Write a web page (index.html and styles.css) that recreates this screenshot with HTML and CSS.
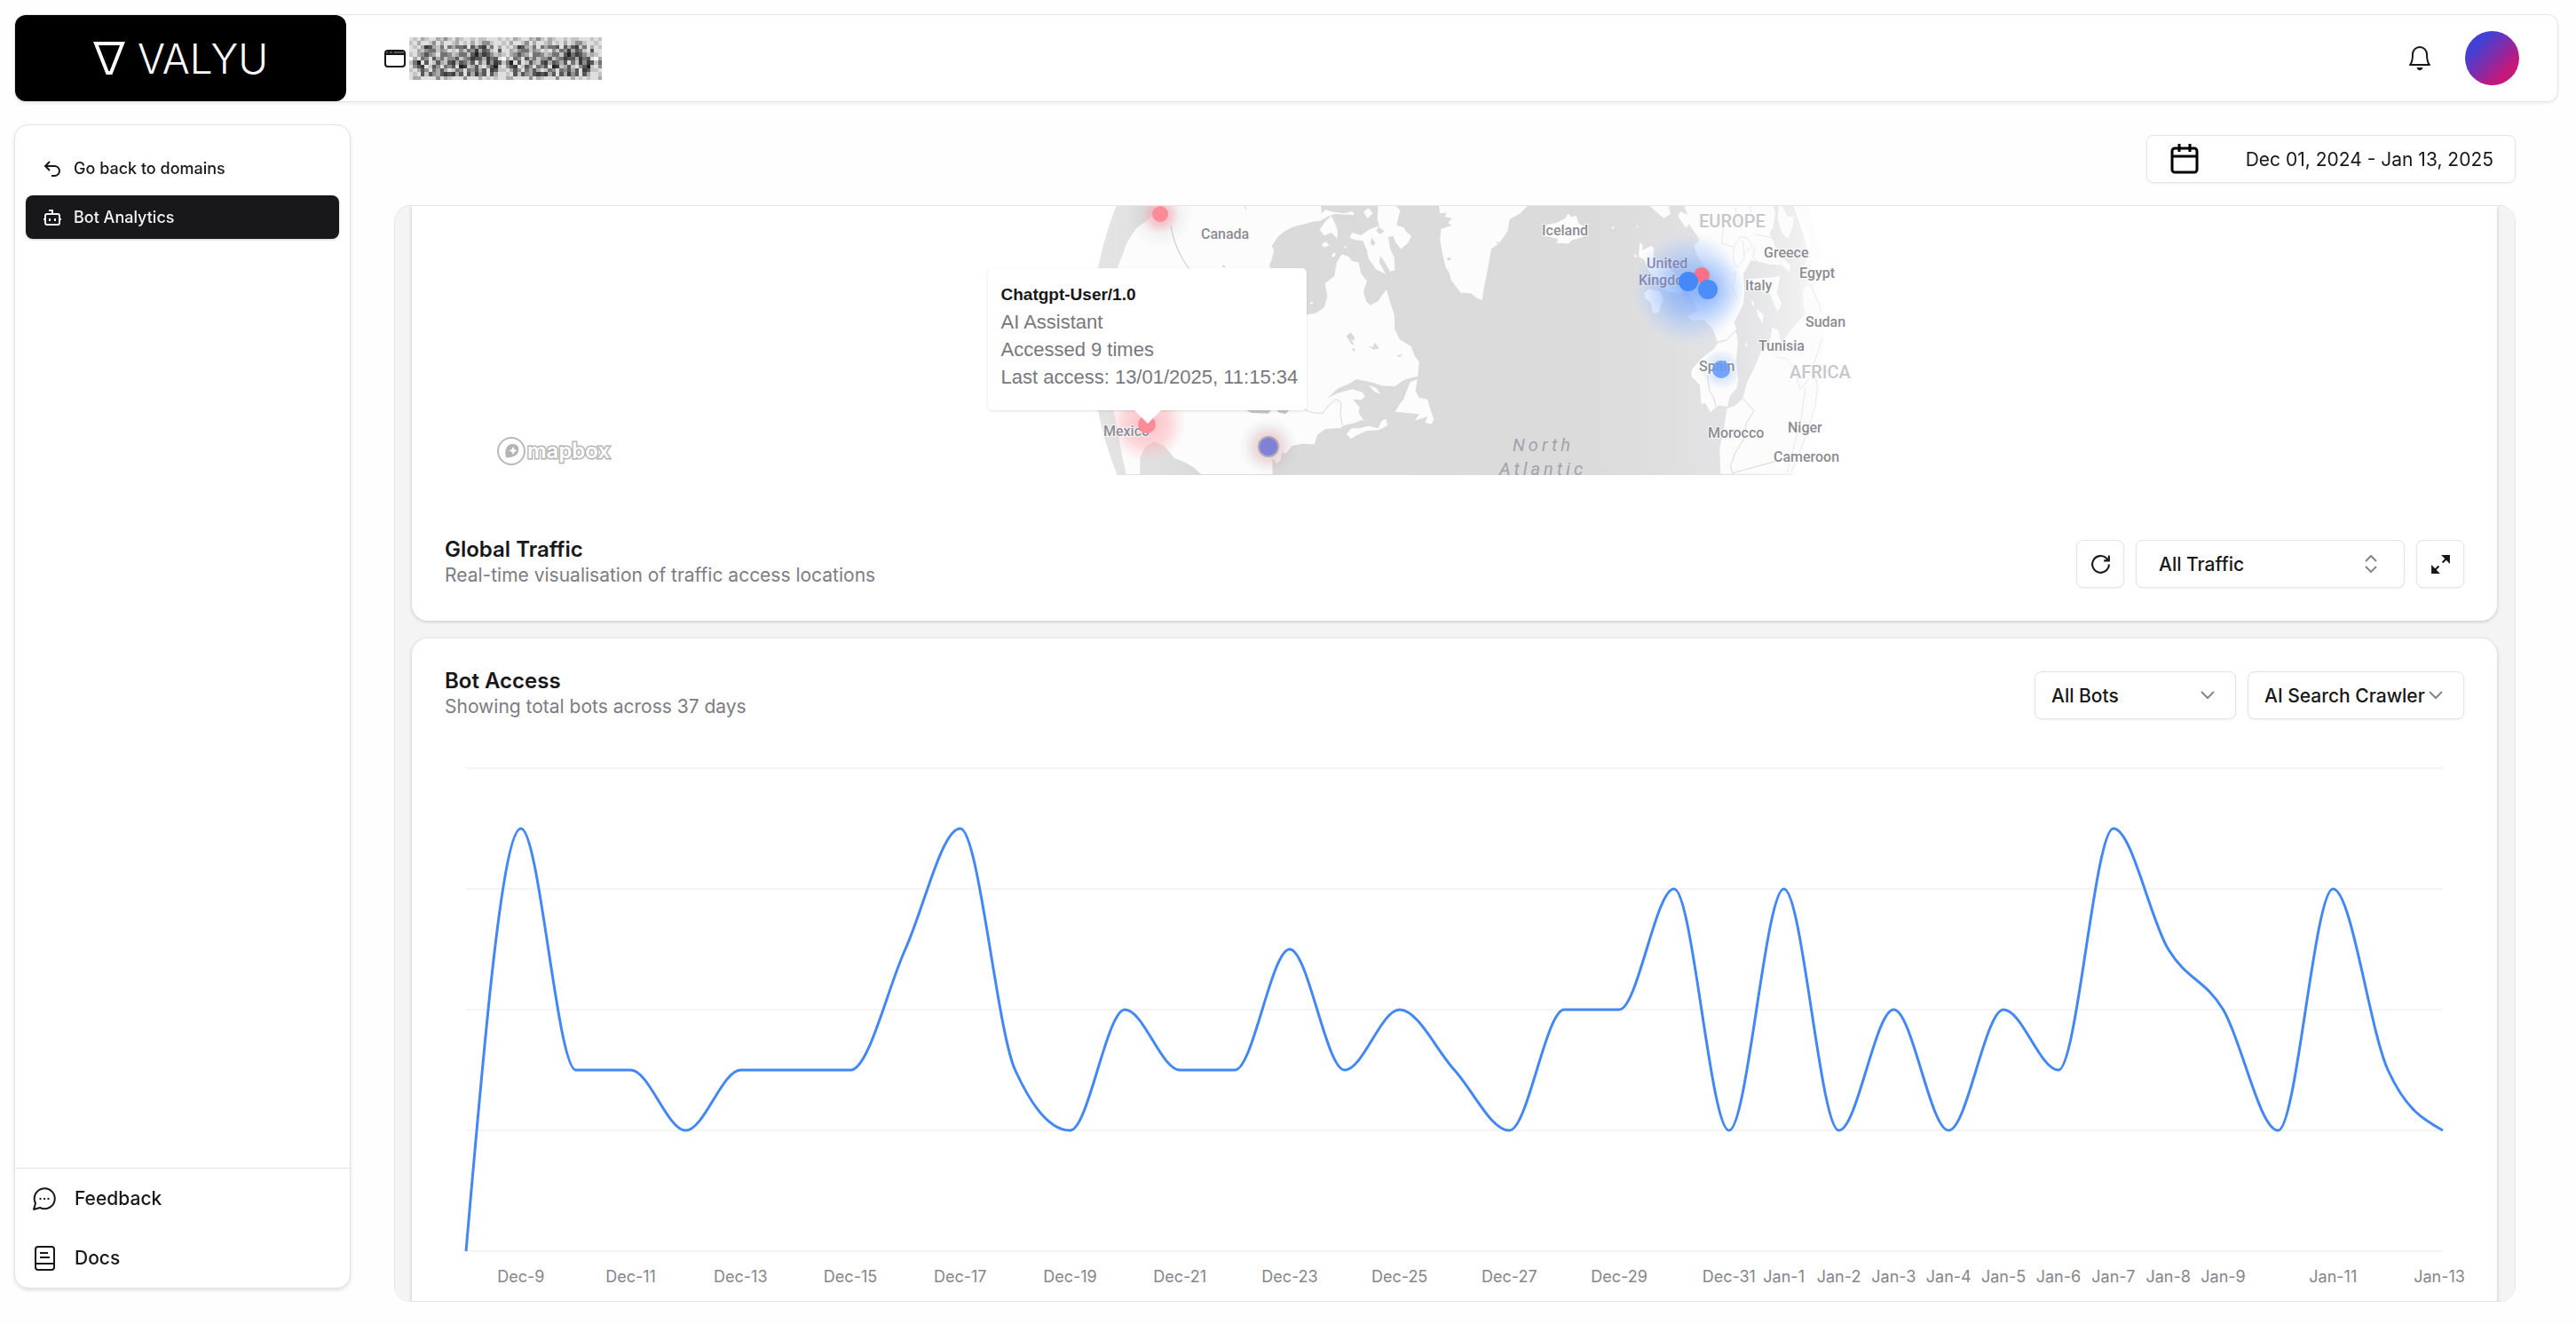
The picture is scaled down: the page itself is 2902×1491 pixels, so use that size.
FILE: index.html
```html
<!DOCTYPE html>
<html lang="en">
<head>
<meta charset="utf-8">
<meta name="viewport" content="width=device-width, initial-scale=1">
<title>Valyu – Bot Analytics</title>
<link rel="stylesheet" href="styles.css">
</head>
<body>
<div class="app">
  <header class="topbar">
    <a class="brand" href="#" aria-label="Valyu home">
      <svg class="brand-mark" viewBox="0 0 36 38" fill="none" stroke="#fff" stroke-width="4" aria-hidden="true"><path d="M3 2H33L20 35H16Z"/></svg>
      <span class="brand-name">VALYU</span>
    </a>
    <div class="domain">
      <svg class="icon-window" viewBox="0 0 24 20" fill="none" stroke="#18181b" stroke-width="2" aria-hidden="true"><rect x="1" y="1" width="22" height="18" rx="3"/><path d="M1 5H23" stroke-width="2"/><path d="M2 3H22" stroke="#55555a"/><path d="M5 1V5M10 1V5"/></svg>
      <canvas class="redacted" id="redacted" width="50" height="11"></canvas>
    </div>
    <div class="topbar-actions">
      <button class="icon-button" type="button" aria-label="Notifications">
        <svg viewBox="0 0 26 30" fill="none" stroke="#18181b" stroke-width="2" stroke-linejoin="round" aria-hidden="true"><path d="M2 22C5 19 5 15 5 10a8 8 0 0 1 16 0c0 5 0 9 3 12Z"/><path d="M10 25.500c1 3 5 3 6 0Z" fill="#18181b" stroke-width="1"/></svg>
      </button>
      <button class="avatar" type="button" aria-label="Account"></button>
    </div>
  </header>

  <div class="body">
    <nav class="sidebar" aria-label="Main">
      <div class="nav-main">
        <a class="nav-item" href="#">
          <svg viewBox="0 0 24 24" fill="none" stroke="currentColor" stroke-width="2" aria-hidden="true"><path d="M9 14L4 9l5-5"/><path d="M4 9h10.500a5.500 5.500 0 0 1 0 11H11"/></svg>
          Go back to domains
        </a>
        <a class="nav-item nav-item-active" href="#">
          <svg viewBox="0 0 24 24" fill="none" stroke="currentColor" stroke-width="2" aria-hidden="true"><path d="M12 8V4H8"/><rect x="4" y="8" width="16" height="12" rx="2"/><path d="M2 14h2M20 14h2M15 13v3M9 13v3"/></svg>
          Bot Analytics
        </a>
      </div>
      <div class="nav-foot">
        <a class="nav-link" href="#">
          <svg viewBox="0 0 28 28" fill="none" stroke="currentColor" stroke-width="2" stroke-linejoin="round" aria-hidden="true"><path d="M2 26l2-7a11.500 11.500 0 1 1 5 5Z"/><path d="M8.500 14h2M13 14h2M17.500 14h2" stroke-width="2"/></svg>
          Feedback
        </a>
        <a class="nav-link" href="#">
          <svg viewBox="0 0 28 28" fill="none" stroke="currentColor" stroke-width="2" aria-hidden="true"><rect x="4" y="1" width="21" height="26" rx="3"/><path d="M4 20H25M9 8H18M9 13H20"/></svg>
          Docs
        </a>
      </div>
    </nav>

    <main class="main">
      <div class="toolbar">
        <button class="control date-range" type="button">
          <svg viewBox="0 0 32 34" fill="none" stroke="#000" stroke-width="3" aria-hidden="true"><rect x="2" y="5" width="28" height="27" rx="3"/><path d="M2 14H30M10 0V9M22 0V9"/></svg>
          <span>Dec 01, 2024 - Jan 13, 2025</span>
        </button>
      </div>

      <div class="panel">
        <section class="card card-map">
          <div class="map">
            <svg class="globe" viewBox="1188 233 902 303" role="img" aria-label="Traffic map">
              <defs>
                <linearGradient id="ocean" gradientUnits="userSpaceOnUse" x1="1229" y1="383" x2="2049" y2="383">
                  <stop offset="0" stop-color="#e5e5e6"/><stop offset=".08" stop-color="#e0e0e0"/><stop offset=".15" stop-color="#dadada"/><stop offset=".7" stop-color="#dbdbdb"/><stop offset=".9" stop-color="#e4e4e6"/><stop offset=".97" stop-color="#efeff0"/><stop offset="1" stop-color="#fbfbfb"/>
                </linearGradient>
                <radialGradient id="heatBlue"><stop offset="0" stop-color="#5c96fa" stop-opacity=".75"/><stop offset=".45" stop-color="#8db5fb" stop-opacity=".6"/><stop offset=".75" stop-color="#a9c7fc" stop-opacity=".35"/><stop offset="1" stop-color="#c0d6ff" stop-opacity="0"/></radialGradient>
                <radialGradient id="heatRed"><stop offset="0" stop-color="#fb8f9b" stop-opacity=".6"/><stop offset=".6" stop-color="#fcb4bb" stop-opacity=".5"/><stop offset="1" stop-color="#fcc8cc" stop-opacity="0"/></radialGradient>
                <radialGradient id="shade"><stop offset="0" stop-color="#55555f" stop-opacity=".5"/><stop offset="1" stop-color="#8c8c96" stop-opacity="0"/></radialGradient>
              </defs>
              <circle cx="1639" cy="383" r="410" fill="url(#ocean)"/>
              <g class="land">
                <g transform="translate(1080 220) scale(.357 .3333)">
                  <path d="M622 30L605 80L560 115L530 165L515 210L500 250L492 400L485 600L488 725L502 800L515 880L528 945H572V890L590 850L620 835L650 850L680 890L715 905L745 925L765 945H990V720H800V36Z"/>
                </g>
                <g transform="translate(1360 228) scale(.3333)">
                  <path d="M0 5H384L386 40L400 28L430 36L465 40L492 32L496 45L430 42L408 50L380 66L354 68L330 76L308 80L285 88L262 100L240 118L218 150L226 165L218 195L210 215L240 300L280 350L335 382L365 378L395 358L406 320L398 276L430 252L438 205L455 178L478 186L488 200L512 206L520 244L540 268L528 305L538 338L552 350L578 336L594 312L606 298L618 340L632 380L634 432L650 465L690 490L700 520L716 542L712 590L680 598L660 606L635 624L590 622L560 612L505 600L480 615L440 632L405 666L440 647L490 634L525 644L533 660L520 670L492 668L515 695L512 714L528 738L555 742L520 738L500 748L462 756L450 765L400 768L372 788L362 820L320 818L285 826L268 850L252 848L248 872L236 884L220 866L218 895L204 920H0Z"/>
                  <path d="M470 785L488 766L515 766L545 758L578 766L590 740L604 734L610 756L580 772L540 774L505 790L486 802Z"/>
                  <path d="M710 600L704 640L716 662L745 668L750 690L766 735L758 752L736 746L745 726L720 734L702 740L716 718L635 710L650 685L664 668L670 650L686 610Z"/>
                  <path d="M545 620L572 630L586 650L566 643Z"/>
                  <path d="M578 10H634L652 30L645 60L640 80L665 88L672 102L690 115L680 138L655 160L638 140L628 116L612 120L618 160L632 188L634 232L618 236L600 205L585 182L582 206L604 246L570 228L545 192L540 165L526 132L500 130L481 122L490 104L520 114L548 94L582 82L575 60Z"/>
                  <path d="M528 35L545 22L560 40L542 56ZM400 66L420 48L432 75L440 95V126L420 105L395 115L380 95ZM386 145L400 136L413 146L396 155ZM420 182L430 170L434 180L424 190ZM462 150l8 2-4 8ZM345 345l14-8-4 10Z"/>
                  <path class="water" d="M470 455L484 442L498 458L496 470L484 464L498 484L488 482ZM545 488L560 492L566 476L582 496L562 500ZM490 495l12 4-8 8ZM640 520L662 515L650 526ZM578 85L600 100L584 110L572 100ZM556 120L568 140L562 150L552 142Z"/>
                  <path class="lake" d="M128 703H216L208 716L150 714ZM234 702H280L264 718L240 712Z"/>
                  <path class="border" d="M330 704L358 714L390 715L412 688L435 667L453 680L450 720L457 756M126 12l5 16"/>
                  <path class="lake" d="M50 220l6-6 6 7Z"/>
                </g>
                <path class="border" d="M1319 255C1322 275 1330 290 1339 303"/>
                <g transform="translate(1600 220) scale(.357 .3333)">
                  <path d="M58 30L62 64L82 62L78 76L100 80L88 96L100 104L66 116L62 150L70 200L80 246L90 262L98 290L128 332L160 334L176 348L195 358L200 320L212 256L224 184L248 166L276 124L282 84L316 64L345 30Z"/>
                  <path d="M385 120L400 102L430 96L458 80L466 64L478 76L492 72L500 98L530 115L522 140L480 154L468 166L430 164L434 150L395 140Z"/>
                  <path class="water" d="M84 214h12v8h-10ZM238 158l12 4-6 6Z"/>
                  <path d="M720 34H782L790 66L768 80L748 62ZM606 108h5v9h-5ZM684 102l4 10-5-2ZM1028 498l5 10-6 12Z"/>
                </g>
                <g transform="translate(1820 228) scale(.3333)">
                  <path d="M228 5H530L540 40L532 90L520 105L545 165L565 192L592 215L588 238L560 214L520 212L500 206L458 198L444 222L432 244L436 300L432 345L415 380L400 408L410 432L345 476L330 432L300 400L262 402L245 388L276 370L262 330L240 300L290 250L300 220L276 182L265 150L284 128L262 96L248 76L238 90L212 50L218 34L244 44Z"/>
                  <path d="M440 262L540 255L556 250L546 312L562 345L548 372L538 352L520 308L480 300L440 280ZM476 362L500 382L498 412L482 388ZM458 328L470 344L464 356ZM640 215L658 160L652 100L622 60L608 8L560 10L582 50L602 50L600 84L582 126L562 104L548 60L552 10H650L700 200Z"/>
                  <path d="M345 478L405 432L413 470L408 540L415 600L410 630L386 656L378 694L350 688L320 712L304 680L290 684L285 620L256 590L258 568L290 530L335 495Z"/>
                  <path d="M376 700L404 690L430 665L445 610L470 560L490 510L520 480L530 424L550 436L560 480L592 436L640 380L632 300L660 268L690 350L705 460L690 640L600 920H355L352 830L366 770Z"/>
                  <path d="M82 136L92 150L90 164L120 150L130 156L128 190L160 204L200 244L236 280L220 312L175 304L160 285L135 262L110 230L96 196L78 186ZM96 310L112 296L150 304L160 330L146 374L126 378L120 342L100 326ZM62 182l8-4v14Z"/>
                  <path class="border" d="M345 476L375 468L410 432M310 588L318 640L330 660L340 694M430 665L468 707L442 748L435 800L404 850L388 895L396 917L540 878"/>
                  <path class="border faint" d="M365 90L358 140L400 154L420 120L444 122L462 150L430 180M400 154L398 200L412 222L436 190L430 130M405 20L412 60L425 95M455 15L460 60L490 80M470 150L465 190L480 200M470 110L540 125M385 250L408 235L395 290L412 330M538 525L578 530L600 562L625 635L652 600M642 630L628 730L580 917M655 275L690 350L695 372M697 466L668 556L682 620L676 690L640 800L592 917"/>
                </g>
              </g>
              <g class="heat">
                <circle cx="1902" cy="326" r="64" fill="url(#heatBlue)"/><circle cx="1924" cy="327" r="40" fill="url(#heatBlue)" opacity=".6"/>
                <circle cx="1939" cy="417" r="24" fill="url(#heatBlue)" opacity=".5"/>
                <circle cx="1307" cy="243" r="38" fill="url(#shade)" opacity=".35"/><circle cx="1307" cy="243" r="22" fill="url(#heatRed)"/>
                <circle cx="1292" cy="478" r="44" fill="url(#heatRed)"/>
                <circle cx="1429" cy="504" r="34" fill="url(#shade)" opacity=".5"/><circle cx="1429" cy="504" r="26" fill="url(#heatRed)" opacity=".5"/>
              </g>
              <g class="map-labels">
                <text x="1353" y="270">Canada</text><text x="1243" y="492">Mexico</text><text x="1737" y="266">Iceland</text>
                <text x="1987" y="291">Greece</text><text x="2027" y="314">Egypt</text><text x="1966" y="328">Italy</text>
                <text class="tinted" x="1855" y="303">United</text><text class="tinted" x="1846" y="322">Kingdom</text><text x="2034" y="369">Sudan</text>
                <text x="1981" y="396">Tunisia</text><text x="1914" y="419">Spain</text><text x="1924" y="494">Morocco</text>
                <text x="2014" y="488">Niger</text><text x="1998" y="521">Cameroon</text>
                <text class="continent" x="1914" y="257">EUROPE</text><text class="continent" x="2016" y="427">AFRICA</text>
                <text class="sea" x="1704" y="509">North</text><text class="sea" x="1689" y="536">Atlantic</text>
              </g>
              <g class="markers">
                <circle cx="1307" cy="242" r="9" fill="#fa8c9a"/>
                <circle cx="1292" cy="479" r="10" fill="#fa8c9a"/>
                <circle cx="1429" cy="504" r="12" fill="#a9a9b4"/><circle cx="1429" cy="504" r="10" fill="#8280d6"/>
                <circle cx="1917" cy="311" r="9" fill="#fb6f88" stroke="#b6aab2" stroke-width="1"/>
                <circle cx="1902" cy="318" r="11" fill="#4688f8"/><circle cx="1924" cy="327" r="11" fill="#4d8df9"/>
                <circle cx="1939" cy="417" r="10" fill="#6398fb" opacity=".85"/>
              </g>
            </svg>
            <div class="popup">
              <h3>Chatgpt-User/1.0</h3>
              <p>AI Assistant</p>
              <p>Accessed 9 times</p>
              <p>Last access: 13/01/2025, 11:15:34</p>
            </div>
            <a class="mapbox" href="#" aria-label="Mapbox">
              <svg viewBox="0 0 134 34" aria-hidden="true"><circle cx="17" cy="17" r="15" fill="#fff" stroke="#b9b9b9" stroke-width="2"/><path d="M11 24C9 17 11 9 19 9c5 0 7 4 6 8-1 5-7 8-14 7Z" fill="#b4b4b4"/><path d="M19 12l1.500 3 3 1.500-3 1.500-1.500 3-1.500-3-3-1.500 3-1.500Z" fill="#fff"/><text x="35" y="25">mapbox</text></svg>
            </a>
          </div>
          <div class="card-row card-row-map">
            <div>
              <h2>Global Traffic</h2>
              <p class="sub">Real-time visualisation of traffic access locations</p>
            </div>
            <div class="controls">
              <button class="control control-icon" type="button" aria-label="Refresh">
                <svg viewBox="0 0 24 24" fill="none" stroke="#18181b" stroke-width="2" aria-hidden="true"><path d="M21 12a9 9 0 1 1-2.600-6.400L21 8"/><path d="M21 2.500V8h-5.500"/></svg>
              </button>
              <div class="select select-traffic">
                <select class="control" aria-label="Traffic"><option>All Traffic</option><option>Bots</option></select>
                <svg viewBox="0 0 16 20" fill="none" stroke="#85858c" stroke-width="2" aria-hidden="true"><path d="M2 7L8 1L14 7M2 13L8 19L14 13"/></svg>
              </div>
              <button class="control control-icon" type="button" aria-label="Expand">
                <svg viewBox="0 0 24 24" fill="none" stroke="#18181b" stroke-width="2" aria-hidden="true"><path d="M14 10L20 4M10 14L4 20"/><path d="M15 3H21V9ZM3 15V21H9Z" fill="#18181b"/></svg>
              </button>
            </div>
          </div>
        </section>

        <section class="card card-chart">
          <div class="card-row">
            <div>
              <h2>Bot Access</h2>
              <p class="sub">Showing total bots across 37 days</p>
            </div>
            <div class="controls">
              <div class="select select-bots">
                <select class="control" aria-label="Bot"><option>All Bots</option></select>
                <svg viewBox="0 0 16 10" fill="none" stroke="#85858c" stroke-width="2" aria-hidden="true"><path d="M1 1L8 8L15 1"/></svg>
              </div>
              <div class="select select-type">
                <select class="control" aria-label="Bot type"><option>AI Search Crawler</option></select>
                <svg viewBox="0 0 16 10" fill="none" stroke="#85858c" stroke-width="2" aria-hidden="true"><path d="M1 1L8 8L15 1"/></svg>
              </div>
            </div>
          </div>
          <svg class="chart" id="chart" role="img" aria-label="Bot access per day"></svg>
        </section>
      </div>
    </main>
  </div>
</div>
<script src="app.js"></script>
</body>
</html>
```
FILE: styles.css
```css
* { box-sizing: border-box; }

body {
  margin: 0;
  background: #fefefe;
  color: #18181b;
  font-family: Inter, "Liberation Sans", sans-serif;
  font-size: 21px;
}

h2, h3, p { margin: 0; }
a { color: inherit; text-decoration: none; }
button, select { font: inherit; color: inherit; cursor: pointer; }

.app {
  display: flex;
  flex-direction: column;
  gap: 25px;
  height: 100vh;
  padding: 16px 20px 25px 16px;
}

/* Top bar */
.topbar {
  display: flex;
  align-items: center;
  flex: none;
  height: 99px;
  border: 1px solid #e4e4e7;
  border-radius: 12px;
  background: #fff;
  box-shadow: 0 2px 3px rgba(0, 0, 0, 0.06);
}
.brand {
  display: flex;
  align-items: center;
  justify-content: center;
  gap: 14px;
  width: 373px;
  height: 97px;
  border-radius: 12px;
  background: #000;
  color: #fff;
}
.brand-mark { width: 36px; height: 38px; }
.brand-name { font-size: 46px; font-weight: 300; line-height: 48px; }
.domain { display: flex; align-items: center; gap: 4px; margin-left: 43px; }
.icon-window { width: 24px; height: 20px; }
.redacted { width: 217px; height: 48px; image-rendering: pixelated; }
.topbar-actions { display: flex; align-items: center; gap: 38px; margin-left: auto; padding-right: 43px; }
.icon-button { display: flex; padding: 0; border: 0; background: none; }
.icon-button svg { width: 26px; height: 30px; }
.avatar {
  width: 61px;
  height: 61px;
  padding: 0;
  border: 0;
  border-radius: 50%;
  background: linear-gradient(135deg, #4440d4 25%, #c4187a 75%);
}

/* Sidebar */
.body { display: flex; flex: 1; min-height: 0; }
.sidebar {
  display: flex;
  flex-direction: column;
  flex: none;
  width: 379px;
  margin-bottom: 15px;
  border: 1px solid #e4e4e7;
  border-radius: 16px;
  background: #fff;
  box-shadow: 0 2px 4px rgba(0, 0, 0, 0.12);
}
.nav-main { display: flex; flex-direction: column; gap: 6px; flex: 1; padding: 24px 12px; }
.nav-item {
  display: flex;
  align-items: center;
  gap: 12px;
  height: 49px;
  padding: 0 18px;
  border-radius: 8px;
  font-size: 18px;
  font-weight: 500;
}
.nav-item svg { width: 24px; height: 24px; }
.nav-item-active { background: #18181b; color: #f4f4f5; box-shadow: 0 1px 3px rgba(0, 0, 0, 0.2); }
.nav-foot { display: flex; flex-direction: column; border-top: 1px solid #e4e4e7; }
.nav-link { display: flex; align-items: center; gap: 20px; height: 67px; padding: 0 19px; font-size: 21px; font-weight: 500; }
.nav-link svg { width: 28px; height: 28px; }

/* Main column */
.main { display: flex; flex-direction: column; gap: 25px; flex: 1; min-width: 0; margin: 0 48px 0 49px; padding-top: 12px; }
.toolbar { display: flex; justify-content: flex-end; }
.control {
  height: 54px;
  border: 1px solid #e4e4e7;
  border-radius: 8px;
  background: #fff;
  box-shadow: 0 1px 3px rgba(0, 0, 0, 0.06);
  font-size: 21px;
  font-weight: 500;
}
.date-range { display: flex; align-items: center; gap: 53px; padding: 0 24px 0 26px; }
.date-range svg { width: 32px; height: 34px; }
.date-range span { font-weight: 400; }

.panel {
  display: flex;
  flex-direction: column;
  gap: 20px;
  flex: 1;
  min-height: 0;
  padding: 0 20px 0 19px;
  overflow-y: auto;
  scrollbar-width: none;
  border: 1px solid #e4e4e7;
  border-radius: 18px;
  background: #f4f4f5;
}
.card { flex: none; background: #fff; box-shadow: 0 1px 4px rgba(0, 0, 0, 0.2); }
.card-map { border-radius: 0 0 18px 18px; }
.card-chart { padding: 33px 0 37px; border-radius: 18px; }
.card-row { display: flex; align-items: flex-end; justify-content: space-between; padding: 0 37px; }
.card-row-map { padding-top: 69px; padding-bottom: 37px; }
h2 { font-size: 24px; font-weight: 600; line-height: 30px; }
.sub { color: #7c7c84; font-size: 21px; line-height: 28px; }
.controls { display: flex; gap: 13px; }
.control-icon { display: flex; align-items: center; justify-content: center; width: 54px; padding: 0; }
.control-icon svg { width: 25px; height: 25px; }
.select { position: relative; }
.select select { width: 100%; padding: 0 18px; appearance: none; }
.select svg { position: absolute; right: 24px; top: 22px; width: 16px; height: 10px; pointer-events: none; }
.select-traffic { width: 303px; }
.select-traffic select { padding: 0 25px; }
.select-traffic svg { right: 30px; top: 17px; height: 20px; }
.select-bots { width: 227px; }
.select-type { width: 244px; }

/* Map */
.map { position: relative; display: flex; justify-content: center; height: 303px; }
.globe { width: 902px; height: 303px; }
.land { fill: #fcfcfc; }
.water { fill: #dadada; }
.lake { fill: #c6c6ca; }
.border { fill: none; stroke: #c4c4ca; stroke-width: 2; }
.land > .border { stroke-width: 1; }
.faint { stroke: #e0e0e4; }
.map-labels text {
  font-family: Roboto, "Liberation Sans", sans-serif;
  font-size: 16px;
  font-weight: 500;
  fill: #8c8c93;
  stroke: #fff;
  stroke-width: 2px;
  stroke-opacity: 0.8;
  paint-order: stroke;
}
.map-labels .tinted { fill: #8486b4; stroke-opacity: 0.2; }
.map-labels .continent { font-size: 20px; fill: #c6c6cb; }
.map-labels .sea { font-size: 20px; font-weight: 400; font-style: italic; fill: #a2a2aa; letter-spacing: 4px; stroke: none; }
.popup {
  position: absolute;
  left: calc(50% - 526px);
  top: 70px;
  padding: 14px 15px;
  border-radius: 5px;
  background: #fff;
  box-shadow: 0 1px 3px rgba(0, 0, 0, 0.12);
  color: #77777e;
  font-family: "Liberation Sans", Arial, sans-serif;
  font-size: 22px;
  line-height: 31px;
  white-space: nowrap;
  width: 359px;
  height: 160px;
}
.popup h3 { color: #18181b; font-size: 19px; font-weight: 700; line-height: 31px; }
.popup::after {
  content: "";
  position: absolute;
  left: 164px;
  top: 159px;
  border: 16px solid transparent;
  border-top-color: #fff;
  border-bottom: 0;
}
.mapbox { position: absolute; left: 95px; top: 259px; }
.mapbox svg { display: block; width: 134px; height: 34px; }
.mapbox text { font-size: 24px; font-weight: 600; fill: #fff; stroke: #b4b4b4; stroke-width: 3px; paint-order: stroke; }

/* Chart */
.chart { display: block; width: 100%; height: 660px; }
.chart .grid { stroke: #f4f4f6; stroke-width: 2; }
.chart .line { fill: none; stroke: #4387f6; stroke-width: 3; stroke-linejoin: round; }
.chart text { fill: #85858c; font-size: 18px; text-anchor: middle; }
```
FILE: app.js
```js
// Monotone line chart, redrawn at the card's width.
const values = [0, 7, 3, 3, 2, 3, 3, 3, 5, 7, 3, 2, 4, 3, 3, 5, 3, 4, 3, 2, 4, 4, 6, 2, 6, 2, 4, 2, 4, 3, 7, 5, 4, 2, 6, 3, 2];
const ticks = { 1: 'Dec-9', 3: 'Dec-11', 5: 'Dec-13', 7: 'Dec-15', 9: 'Dec-17', 11: 'Dec-19', 13: 'Dec-21', 15: 'Dec-23', 17: 'Dec-25', 19: 'Dec-27', 21: 'Dec-29', 23: 'Dec-31', 24: 'Jan-1', 25: 'Jan-2', 26: 'Jan-3', 27: 'Jan-4', 28: 'Jan-5', 29: 'Jan-6', 30: 'Jan-7', 31: 'Jan-8', 32: 'Jan-9', 34: 'Jan-11', 36: 'Jan-13' };
const chart = document.getElementById('chart');

function drawChart() {
  const width = chart.clientWidth;
  const left = 61, right = width - 61, top = 55, bottom = 599;
  const step = (right - left) / (values.length - 1);
  const x = i => left + i * step;
  const y = v => bottom - v * (bottom - top) / 8;
  const pts = values.map((v, i) => [x(i), y(v)]);
  const n = pts.length;
  const slope = i => (pts[i + 1][1] - pts[i][1]) / step;
  const m = pts.map((_, i) => {
    if (i === 0 || i === n - 1) return 0;
    const a = slope(i - 1), b = slope(i);
    return (Math.sign(a) + Math.sign(b)) * Math.min(Math.abs(a), Math.abs(b), 0.5 * Math.abs((a + b) / 2)) || 0;
  });
  m[0] = (3 * slope(0) - m[1]) / 2;
  m[n - 1] = (3 * slope(n - 2) - m[n - 2]) / 2;
  let d = `M${pts[0]}`;
  for (let i = 1; i < n; i++) {
    const h = step / 3, p = pts[i - 1], q = pts[i];
    d += `C${p[0] + h},${p[1] + h * m[i - 1]},${q[0] - h},${q[1] - h * m[i]},${q}`;
  }
  let out = '';
  for (let v = 0; v <= 8; v += 2) out += `<line class="grid" x1="${left}" x2="${right}" y1="${y(v)}" y2="${y(v)}"/>`;
  for (const i in ticks) out += `<text x="${Math.min(x(+i), width - 65)}" y="634">${ticks[i]}</text>`;
  chart.innerHTML = out + `<path class="line" d="${d}"/>`;
}
drawChart();
window.addEventListener('resize', drawChart);

const rows = [
  '121321132421321121221112',
  '213112413112312131244211',
  '121376325153556163672513',
  '113245524312142547365216',
  '213464315542355268576423',
  '031541635244624576637561',
  '258161263267365361527476',
  '146712641546187236214682',
  '213641536312541546361762',
  '121626436767361637461631',
  '133111141321114111312121'
];
const ctx = document.getElementById('redacted').getContext('2d');
rows.forEach((row, r) => {
  for (let c = 0; c < 50; c++) {
    const level = 250 - row[c % 24] * 27;
    ctx.fillStyle = `rgb(${level},${level},${level})`;
    ctx.fillRect(c, r, 1, 1);
  }
});
```
